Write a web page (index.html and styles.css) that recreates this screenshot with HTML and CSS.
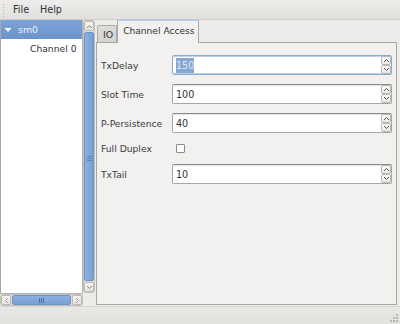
FILE: index.html
```html
<!DOCTYPE html>
<html>
<head>
<meta charset="utf-8">
<link rel="stylesheet" href="styles.css">
</head>
<body>
<div class="window">
  <div class="menubar">
    <span class="handle"></span>
    <span class="menu">File</span>
    <span class="menu">Help</span>
  </div>
  <div class="main">
    <div class="side">
      <div class="tree">
        <div class="row sel">
          <svg class="expander" width="8" height="6" viewBox="0 0 8 6"><path d="M0.5 1 L7.5 1 L4 5 Z" fill="#ffffff"/></svg>
          <span>sm0</span>
        </div>
        <div class="row child">Channel 0</div>
      </div>
      <div class="vscroll">
        <div class="sbtn vbtn">
          <svg width="7" height="5" viewBox="0 0 7 5"><path d="M1 4 L3.5 1.5 L6 4" fill="none" stroke="#8a8a8a" stroke-width="1"/></svg>
        </div>
        <div class="vthumb"><span class="vgrip"></span></div>
        <div class="sbtn vbtn">
          <svg width="7" height="5" viewBox="0 0 7 5"><path d="M1 1 L3.5 3.5 L6 1" fill="none" stroke="#8a8a8a" stroke-width="1"/></svg>
        </div>
      </div>
      <div class="hscroll">
        <div class="sbtn hbtn">
          <svg width="5" height="7" viewBox="0 0 5 7"><path d="M4 1 L1.5 3.5 L4 6" fill="none" stroke="#a0a0a0" stroke-width="1"/></svg>
        </div>
        <div class="hthumb"><span class="hgrip"></span></div>
        <div class="sbtn hbtn">
          <svg width="5" height="7" viewBox="0 0 5 7"><path d="M1 1 L3.5 3.5 L1 6" fill="none" stroke="#a0a0a0" stroke-width="1"/></svg>
        </div>
      </div>
      <div class="corner"></div>
    </div>
    <div class="notebook">
      <div class="tabs">
        <div class="tab">IO</div>
        <div class="tab active">Channel Access</div>
      </div>
      <div class="page">
        <div class="form">
          <label class="lbl">TxDelay</label>
          <div class="spin focus"><span class="val"><span class="selected">150</span></span><span class="arrows"><span class="arr"><svg width="7" height="5" viewBox="0 0 7 5"><path d="M1 4 L3.5 1.5 L6 4" fill="none" stroke="#555" stroke-width="1"/></svg></span><span class="arr"><svg width="7" height="5" viewBox="0 0 7 5"><path d="M1 1 L3.5 3.5 L6 1" fill="none" stroke="#555" stroke-width="1"/></svg></span></span></div>
          <label class="lbl">Slot Time</label>
          <div class="spin"><span class="val">100</span><span class="arrows"><span class="arr"><svg width="7" height="5" viewBox="0 0 7 5"><path d="M1 4 L3.5 1.5 L6 4" fill="none" stroke="#555" stroke-width="1"/></svg></span><span class="arr"><svg width="7" height="5" viewBox="0 0 7 5"><path d="M1 1 L3.5 3.5 L6 1" fill="none" stroke="#555" stroke-width="1"/></svg></span></span></div>
          <label class="lbl">P-Persistence</label>
          <div class="spin"><span class="val">40</span><span class="arrows"><span class="arr"><svg width="7" height="5" viewBox="0 0 7 5"><path d="M1 4 L3.5 1.5 L6 4" fill="none" stroke="#555" stroke-width="1"/></svg></span><span class="arr"><svg width="7" height="5" viewBox="0 0 7 5"><path d="M1 1 L3.5 3.5 L6 1" fill="none" stroke="#555" stroke-width="1"/></svg></span></span></div>
          <label class="lbl">Full Duplex</label>
          <div class="checkrow"><span class="check"></span></div>
          <label class="lbl">TxTail</label>
          <div class="spin"><span class="val">10</span><span class="arrows"><span class="arr"><svg width="7" height="5" viewBox="0 0 7 5"><path d="M1 4 L3.5 1.5 L6 4" fill="none" stroke="#555" stroke-width="1"/></svg></span><span class="arr"><svg width="7" height="5" viewBox="0 0 7 5"><path d="M1 1 L3.5 3.5 L6 1" fill="none" stroke="#555" stroke-width="1"/></svg></span></span></div>
        </div>
      </div>
    </div>
  </div>
  <div class="statusbar">
    <svg class="resize" width="11" height="11" viewBox="0 0 11 11">
      <g fill="#b8b6b2">
        <rect x="8" y="2" width="2" height="2"/>
        <rect x="5" y="5" width="2" height="2"/><rect x="8" y="5" width="2" height="2"/>
        <rect x="2" y="8" width="2" height="2"/><rect x="5" y="8" width="2" height="2"/><rect x="8" y="8" width="2" height="2"/>
      </g>
    </svg>
  </div>
</div>
</body>
</html>
```

FILE: styles.css
```css
* { box-sizing: border-box; }
html, body { margin: 0; padding: 0; }
body {
  width: 400px;
  height: 324px;
  overflow: hidden;
  background: #edecea;
  font-family: "DejaVu Sans", sans-serif;
  font-size: 9.2px;
  color: #3a3c3e;
}
.window {
  width: 400px;
  height: 324px;
  display: flex;
  flex-direction: column;
}
.menubar {
  height: 20px;
  flex: none;
  display: flex;
  align-items: center;
  background: linear-gradient(#eeedeb, #e2e0dd);
  border-bottom: 1px solid #d0cec9;
  padding-left: 2px;
}
.handle {
  width: 3px;
  height: 14px;
  margin-right: 8px;
  background-image: radial-gradient(circle, #b5b3ae 0.6px, transparent 0.8px);
  background-size: 3px 3px;
}
.menu {
  margin-right: 11px;
  font-size: 9.6px;
  color: #2e3436;
}
.main {
  flex: none;
  height: 286px;
  display: flex;
}
.side {
  width: 96px;
  flex: none;
  display: grid;
  grid-template-columns: 83px 13px;
  grid-template-rows: 274px 12px;
}
.tree {
  background: #ffffff;
  border-left: 1px solid #a9a7a3;
  border-right: 1px solid #b7b5b1;
  border-bottom: 1px solid #b7b5b1;
}
.row {
  height: 19px;
  display: flex;
  align-items: center;
}
.row.sel {
  background: linear-gradient(#7ea3d6, #6b94cc);
  color: #eef3fa;
  padding-left: 3px;
  font-size: 9.4px;
}
.expander { margin-right: 6px; }
.row.child {
  padding-left: 29px;
  color: #2e3436;
}
.vscroll {
  display: flex;
  flex-direction: column;
  background: #dedcd8;
  border: 1px solid #c2c0bb;
  border-radius: 3px;
  margin: 0 1px 1px 0;
}
.sbtn {
  flex: none;
  display: flex;
  align-items: center;
  justify-content: center;
  background: linear-gradient(#f7f6f5, #e6e4e1);
  border: 1px solid #bdbbb6;
  border-radius: 2px;
}
.vbtn { height: 10px; }
.vthumb {
  flex: 1;
  margin: 1px 0;
  background: linear-gradient(90deg, #8cb0e0, #79a0d6);
  border: 1px solid #6f93c6;
  border-radius: 2px;
  display: flex;
  align-items: center;
  justify-content: center;
}
.vgrip {
  width: 5px;
  height: 5px;
  margin-top: 4px;
  background: repeating-linear-gradient(#5f85bb 0 1px, transparent 1px 2px);
}
.hscroll {
  display: flex;
  background: #dedcd8;
  border: 1px solid #c2c0bb;
  border-radius: 3px;
}
.hbtn { width: 10px; }
.hthumb {
  flex: 1;
  margin: 0 1px;
  background: linear-gradient(#8cb0e0, #79a0d6);
  border: 1px solid #6f93c6;
  border-radius: 2px;
  display: flex;
  align-items: center;
  justify-content: center;
}
.hgrip {
  width: 5px;
  height: 5px;
  background: repeating-linear-gradient(90deg, #4f6f9e 0 1px, transparent 1px 2px);
}
.corner { background: #edecea; }
.notebook {
  flex: none;
  width: 304px;
  display: flex;
  flex-direction: column;
}
.tabs {
  height: 22px;
  flex: none;
  display: flex;
  align-items: flex-end;
  padding-left: 1px;
  position: relative;
  z-index: 1;
}
.tab {
  height: 17px;
  padding: 0 3px 0 5px;
  display: flex;
  align-items: center;
  background: linear-gradient(#dedcd8, #d6d4cf);
  border: 1px solid #aeaca8;
  border-bottom: none;
  border-radius: 2px 2px 0 0;
  font-size: 9.4px;
  color: #2e3436;
}
.tab.active {
  height: 24px;
  margin-bottom: -1px;
  padding: 0 3px 2px 5px;
  background: #f2f1f0;
  border-color: #a9a7a3;
  border-top: 2px solid #b9cbe4;
  font-size: 9.1px;
}
.page {
  flex: 1;
  background: #f2f1f0;
  border: 1px solid #a9a7a3;
  margin-right: 3px;
  margin-bottom: 1px;
  padding: 12px 4px 0 4px;
}
.form {
  display: grid;
  grid-template-columns: 71px 1fr;
  row-gap: 9px;
  align-items: center;
}
.lbl {
  color: #3a3c3e;
}
.spin {
  height: 20px;
  display: flex;
  align-items: center;
  background: #ffffff;
  border: 1px solid #a9a7a3;
  border-top-color: #8f8d89;
  border-radius: 2px;
  box-shadow: inset 0 1px 0 #e4e3e1;
  padding: 0 0 0 3px;
}
.spin.focus {
  border-color: #8aaad3;
  box-shadow: inset 0 1px 0 #bfd0e7, inset 0 -1px 0 #bfd0e7;
}
.val {
  flex: 1;
  font-size: 9.6px;
  color: #2e3436;
}
.selected {
  background: #86a6d4;
  color: #dfe8f5;
  padding: 2px 0;
}
.arrows {
  width: 10px;
  height: 18px;
  display: flex;
  flex-direction: column;
}
.arr {
  flex: 1;
  display: flex;
  align-items: center;
  justify-content: center;
  background: linear-gradient(#fbfbfa, #e9e8e5);
  border: 1px solid #b9b7b3;
  border-radius: 2px;
}
.checkrow {
  height: 13px;
  display: flex;
  align-items: center;
  padding-left: 4px;
}
.check {
  width: 9px;
  height: 9px;
  background: #ffffff;
  border: 1px solid #8b8985;
  border-radius: 1px;
}
.statusbar {
  flex: 1;
  display: flex;
  justify-content: flex-end;
  align-items: flex-end;
  background: linear-gradient(#e9e8e6, #e4e2df);
  border-top: 1px solid #d7d5d1;
}
.resize { margin: 0 1px 1px 0; }
```
